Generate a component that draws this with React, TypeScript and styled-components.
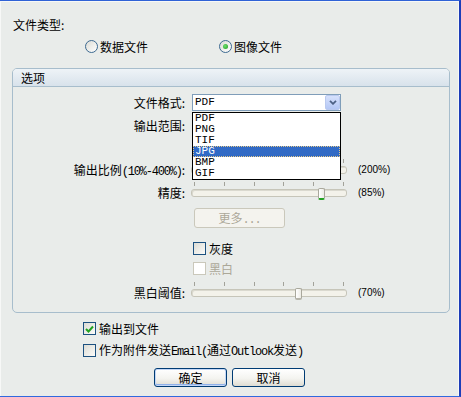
import { styled, createGlobalStyle } from "styled-components";

const GlobalStyle = createGlobalStyle`
  html, body {
    margin: 0;
    padding: 0;
    background: #e9ecea;
  }
  body {
    font-family: "Noto Sans CJK SC", "Noto Sans", sans-serif;
    font-size: 12px;
    color: #000;
  }
`;

const FORMATS = ["PDF", "PNG", "TIF", "JPG", "BMP", "GIF"];

const Window = styled.div`
  width: 461px;
  height: 397px;
  box-sizing: border-box;
  background: #e9ecea;
  border-top: 1px solid #2f62d6;
  border-right: 2px solid #1d3db8;
  border-bottom: 1px solid #3169de;
  box-shadow: inset 1px 1px 0 #f7f8f7, inset -1px 0 0 #f7f8f7;
  display: flex;
  flex-direction: column;
  overflow: hidden;
`;

const Text = styled.span`
  font-size: 12px;
  line-height: 12px;
  white-space: nowrap;
`;

const Latin = styled.span`
  font-family: "Liberation Mono", monospace;
  font-size: 12px;
  letter-spacing: -1.2px;
`;

const TypeLabel = styled.div`
  margin: 18px 0 0 13px;
  height: 12px;
  line-height: 12px;
`;

const RadioRow = styled.div`
  margin: 9px 0 0 85px;
  height: 13px;
  display: grid;
  grid-template-columns: 134px auto;
`;

const RadioItem = styled.label`
  display: flex;
  align-items: center;
  gap: 2px;
`;

const RadioCircle = styled.span<{ $checked?: boolean }>`
  position: relative;
  width: 13px;
  height: 13px;
  box-sizing: border-box;
  border-radius: 50%;
  border: 1px solid #3d6a91;
  background: linear-gradient(135deg, #dcdcd5, #ffffff);

  &::after {
    content: "";
    display: ${(p) => (p.$checked ? "block" : "none")};
    position: absolute;
    left: 3px;
    top: 3px;
    width: 5px;
    height: 5px;
    border-radius: 50%;
    background: radial-gradient(circle at 40% 40%, #6ee06e, #1f9a1f);
  }
`;

const Group = styled.div`
  margin: 15px 0 0 12px;
  width: 438px;
  height: 245px;
  box-sizing: border-box;
  border: 1px solid #a7bdcc;
  border-radius: 5px;
  display: flex;
  flex-direction: column;
`;

const GroupHeader = styled.div`
  height: 17px;
  border-bottom: 1px solid #a7bdcc;
  border-radius: 4px 4px 0 0;
  background: linear-gradient(#eef3f7, #d8e2eb);
  padding-left: 8px;
  line-height: 17px;
`;

const FieldRow = styled.div<{ $top: number; $h: number; $slider?: boolean }>`
  display: grid;
  grid-template-columns: 172px 156px auto;
  column-gap: 6px;
  height: ${(p) => p.$h}px;
  margin-top: ${(p) => p.$top}px;
  align-items: ${(p) => (p.$slider ? "end" : "center")};
`;

const FieldLabel = styled.div`
  text-align: right;
  line-height: 14px;
  height: 14px;
  white-space: nowrap;
`;

const ValueText = styled.div`
  padding-left: 5px;
  font-family: "Liberation Sans", Arial, sans-serif;
  font-size: 10px;
  line-height: 14px;
  height: 14px;
`;

const SelectBox = styled.div`
  position: relative;
  margin-left: 1px;
  width: 149px;
  height: 17px;
  box-sizing: border-box;
  border: 1px solid #7f9db9;
  background: #fff;
  display: flex;
  align-items: center;
  padding-left: 2px;
`;

const SelectValue = styled.span`
  font-family: "Liberation Mono", monospace;
  font-size: 11px;
  line-height: 15px;
  flex: 1;
`;

const DropButton = styled.span`
  width: 15px;
  height: 15px;
  box-sizing: border-box;
  border-radius: 2px;
  border: 1px solid #b9c9ef;
  background: linear-gradient(#d6e1fc, #b4c7f5);
  display: flex;
  align-items: center;
  justify-content: center;
`;

const DropList = styled.ul`
  position: absolute;
  left: -1px;
  top: 17px;
  z-index: 10;
  width: 149px;
  box-sizing: border-box;
  margin: 0;
  padding: 0;
  list-style: none;
  background: #fff;
  border: 1px solid #000;
`;

const DropItem = styled.li<{ $selected?: boolean }>`
  height: 11px;
  line-height: 11px;
  padding-left: 2px;
  box-sizing: border-box;
  font-family: "Liberation Mono", monospace;
  font-size: 11px;
  color: ${(p) => (p.$selected ? "#fff" : "#000")};
  background: ${(p) => (p.$selected ? "#316ac5" : "transparent")};
  outline: ${(p) => (p.$selected ? "1px dotted #e4c888" : "none")};
  outline-offset: -1px;
`;

const SliderWrap = styled.div`
  position: relative;
  width: 156px;
  height: 18px;
`;

const Ticks = styled.div`
  display: flex;
  justify-content: space-between;
  padding: 0 3px;
  height: 4px;
`;

const Tick = styled.span`
  width: 1px;
  height: 4px;
  background: #a2a29a;
`;

const Track = styled.div`
  position: absolute;
  left: 0;
  right: 0;
  top: 7px;
  height: 8px;
  box-sizing: border-box;
  border: 1px solid #c6c5b9;
  border-radius: 3px;
  background: #f3f2ea;
  box-shadow: inset 1px 1px 0 #dad9cf;
`;

const Thumb = styled.div<{ $active?: boolean }>`
  position: absolute;
  top: 6px;
  width: 7px;
  height: 12px;
  box-sizing: border-box;
  border: 1px solid #a9a89c;
  border-bottom: 2px solid ${(p) => (p.$active ? "#22a322" : "#b6b5aa")};
  border-radius: 2px;
  background: linear-gradient(90deg, #ffffff, #ecebe4);
`;

const MoreButton = styled.button`
  margin-left: 3px;
  width: 91px;
  height: 20px;
  padding: 0;
  box-sizing: border-box;
  border: 1px solid #cac8bb;
  border-radius: 3px;
  background: #f4f3ee;
  color: #aca899;
  font-family: "Noto Sans CJK SC", sans-serif;
  font-size: 12px;
  line-height: 18px;
`;

const CheckItem = styled.label<{ $disabled?: boolean; $indent?: number }>`
  display: flex;
  align-items: center;
  gap: 3px;
  height: 13px;
  margin-left: ${(p) => p.$indent ?? 0}px;
  color: ${(p) => (p.$disabled ? "#aca899" : "#000")};
`;

const CheckBox = styled.span<{ $disabled?: boolean }>`
  width: 13px;
  height: 13px;
  box-sizing: border-box;
  border: 1px solid ${(p) => (p.$disabled ? "#cac8bb" : "#1c5180")};
  background: ${(p) =>
    p.$disabled ? "#fff" : "linear-gradient(135deg, #dcdcd5, #fbfbf9)"};
  display: flex;
  align-items: center;
  justify-content: center;
`;

const OuterCheck = styled.div<{ $top: number }>`
  margin-top: ${(p) => p.$top}px;
`;

const ButtonRow = styled.div`
  margin: 11px 0 0 154px;
  display: flex;
  gap: 5px;
`;

const DialogButton = styled.button<{ $default?: boolean }>`
  width: 73px;
  height: 19px;
  padding: 0;
  box-sizing: border-box;
  border: 1px solid #003c74;
  border-radius: 3px;
  background: linear-gradient(#ffffff, #f4f4f0 55%, #dedcd2);
  box-shadow: ${(p) =>
    p.$default ? "inset 0 0 0 1px #c4d7f6, inset 0 -1px 0 1px #8fb1ea" : "none"};
  font-family: "Noto Sans CJK SC", sans-serif;
  font-size: 12px;
  line-height: 17px;
  color: #000;
`;

function Slider({ value, active }: { value: number; active?: boolean }) {
  return (
    <SliderWrap>
      <Ticks>
        {Array.from({ length: 6 }).map((_, i) => (
          <Tick key={i} />
        ))}
      </Ticks>
      <Track />
      <Thumb $active={active} style={{ left: Math.round(value * 1.49) }} />
    </SliderWrap>
  );
}

function Check({
  label,
  checked,
  disabled,
  indent,
}: {
  label: React.ReactNode;
  checked?: boolean;
  disabled?: boolean;
  indent?: number;
}) {
  return (
    <CheckItem $disabled={disabled} $indent={indent}>
      <CheckBox $disabled={disabled}>
        {checked && (
          <svg width="9" height="8" viewBox="0 0 9 8">
            <path d="M1 4 L3.5 6.5 L8 1.5" fill="none" stroke="#21a121" strokeWidth="2" />
          </svg>
        )}
      </CheckBox>
      <Text>{label}</Text>
    </CheckItem>
  );
}

export default function App() {
  return (
    <>
      <GlobalStyle />
      <Window>
        <TypeLabel>文件类型:</TypeLabel>
        <RadioRow>
          <RadioItem>
            <RadioCircle />
            <Text>数据文件</Text>
          </RadioItem>
          <RadioItem>
            <RadioCircle $checked />
            <Text>图像文件</Text>
          </RadioItem>
        </RadioRow>

        <Group>
          <GroupHeader>选项</GroupHeader>

          <FieldRow $top={7} $h={17}>
            <FieldLabel>文件格式:</FieldLabel>
            <SelectBox>
              <SelectValue>PDF</SelectValue>
              <DropButton>
                <svg width="8" height="5" viewBox="0 0 8 5">
                  <path d="M1 0.8 L4 3.8 L7 0.8" fill="none" stroke="#4d6185" strokeWidth="1.8" />
                </svg>
              </DropButton>
              <DropList>
                {FORMATS.map((f) => (
                  <DropItem key={f} $selected={f === "JPG"}>
                    {f}
                  </DropItem>
                ))}
              </DropList>
            </SelectBox>
          </FieldRow>

          <FieldRow $top={6} $h={17}>
            <FieldLabel>输出范围:</FieldLabel>
            <SelectBox>
              <SelectValue />
            </SelectBox>
          </FieldRow>

          <FieldRow $top={25} $h={18} $slider>
            <FieldLabel>
              输出比例<Latin>(10%-400%)</Latin>:
            </FieldLabel>
            <Slider value={49} />
            <ValueText>(200%)</ValueText>
          </FieldRow>

          <FieldRow $top={5} $h={18} $slider>
            <FieldLabel>精度:</FieldLabel>
            <Slider value={85} active />
            <ValueText>(85%)</ValueText>
          </FieldRow>

          <FieldRow $top={8} $h={20}>
            <span />
            <MoreButton disabled>
              更多<Latin>...</Latin>
            </MoreButton>
          </FieldRow>

          <FieldRow $top={14} $h={13}>
            <span />
            <Check label="灰度" indent={2} />
          </FieldRow>

          <FieldRow $top={7} $h={13}>
            <span />
            <Check label="黑白" indent={2} disabled />
          </FieldRow>

          <FieldRow $top={7} $h={18} $slider>
            <FieldLabel>黑白阈值:</FieldLabel>
            <Slider value={70} />
            <ValueText>(70%)</ValueText>
          </FieldRow>
        </Group>

        <OuterCheck $top={9}>
          <Check label="输出到文件" checked indent={83} />
        </OuterCheck>
        <OuterCheck $top={9}>
          <Check
            indent={83}
            label={
              <>
                作为附件发送<Latin>Email(</Latin>通过<Latin>Outlook</Latin>发送
                <Latin>)</Latin>
              </>
            }
          />
        </OuterCheck>

        <ButtonRow>
          <DialogButton $default>确定</DialogButton>
          <DialogButton>取消</DialogButton>
        </ButtonRow>
      </Window>
    </>
  );
}
